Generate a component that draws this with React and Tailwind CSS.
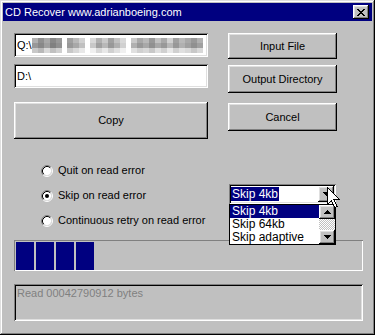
import React from "react";

const raised =
  "shadow-[inset_-1px_-1px_#000,inset_1px_1px_#fff,inset_-2px_-2px_#808080,inset_2px_2px_#dfdfdf]";
const sunken =
  "shadow-[inset_1px_1px_#808080,inset_-1px_-1px_#fff,inset_2px_2px_#000,inset_-2px_-2px_#dfdfdf]";

function Radio({ checked }) {
  return (
    <svg width="12" height="12" viewBox="0 0 12 12" className="shrink-0">
      <circle cx="6" cy="6" r="4.2" fill="#fff" />
      <path d="M2.11 9.89 A5.5 5.5 0 0 1 9.89 2.11" fill="none" stroke="#808080" strokeWidth="1" />
      <path d="M9.89 2.11 A5.5 5.5 0 0 1 2.11 9.89" fill="none" stroke="#fff" strokeWidth="1" />
      <path d="M2.82 9.18 A4.5 4.5 0 0 1 9.18 2.82" fill="none" stroke="#000" strokeWidth="1" />
      <path d="M9.18 2.82 A4.5 4.5 0 0 1 2.82 9.18" fill="none" stroke="#dfdfdf" strokeWidth="1" />
      {checked && <circle cx="6" cy="6" r="2" fill="#000" />}
    </svg>
  );
}

function Arrow({ up }) {
  return (
    <svg width="7" height="4" viewBox="0 0 7 4" shapeRendering="crispEdges">
      {up ? (
        <>
          <rect x="3" y="0" width="1" height="1" fill="#000" />
          <rect x="2" y="1" width="3" height="1" fill="#000" />
          <rect x="1" y="2" width="5" height="1" fill="#000" />
          <rect x="0" y="3" width="7" height="1" fill="#000" />
        </>
      ) : (
        <>
          <rect x="0" y="0" width="7" height="1" fill="#000" />
          <rect x="1" y="1" width="5" height="1" fill="#000" />
          <rect x="2" y="2" width="3" height="1" fill="#000" />
          <rect x="3" y="3" width="1" height="1" fill="#000" />
        </>
      )}
    </svg>
  );
}

function CloseX() {
  const rows = [
    [[0, 2], [6, 2]],
    [[1, 2], [5, 2]],
    [[2, 4]],
    [[3, 2]],
    [[2, 4]],
    [[1, 2], [5, 2]],
    [[0, 2], [6, 2]],
  ];
  return (
    <svg width="8" height="7" viewBox="0 0 8 7" shapeRendering="crispEdges">
      {rows.map((segs, y) =>
        segs.map(([x, w], i) => <rect key={y + "-" + i} x={x} y={y} width={w} height="1" fill="#000" />)
      )}
    </svg>
  );
}

// pixelated (blurred) path data
const blurCols = [
  [0xb0, 0x98, 0xc8], [0x90, 0x88, 0xb8], [0xa8, 0xa0, 0xd8], [0x88, 0x80, 0xc0], [0x98, 0x90, 0xd0],
  null,
  [0xa0, 0x98, 0xc8], [0xb8, 0xa8, 0xd8], [0xd0, 0xc0, 0xe8],
  null,
  [0xd8, 0xc8, 0xf0], [0xb0, 0xa0, 0xd8], [0xc8, 0xb8, 0xe8], [0xa0, 0x98, 0xd0], [0xc0, 0xb0, 0xe0], [0xd8, 0xd0, 0xf0],
  null,
  [0xc8, 0xb0, 0xe0], [0xa8, 0x98, 0xd0], [0xb8, 0xa8, 0xd8], [0x98, 0x90, 0xc8], [0xc0, 0xa8, 0xe0], [0xa8, 0x98, 0xd0], [0xd0, 0xb8, 0xe8], [0xa0, 0x98, 0xd0], [0xb8, 0xb0, 0xe0], [0xa8, 0xa0, 0xd8], [0x98, 0x90, 0xc8], [0xb0, 0xa0, 0xd8],
];

function Blur() {
  return (
    <div className="flex items-center h-[15px]">
      {blurCols.map((c, i) =>
        c === null ? (
          <div key={i} className="w-[5px] h-full" />
        ) : (
          <div key={i} className="w-[6px] h-full flex flex-col">
            {c.map((g, j) => (
              <div key={j} className="flex-1" style={{ background: `rgb(${g},${g},${g})` }} />
            ))}
          </div>
        )
      )}
    </div>
  );
}

function Button({ children, className }) {
  return (
    <div className={`flex items-center justify-center bg-[#c0c0c0] ${raised} ${className}`}>
      {children}
    </div>
  );
}

export default function App() {
  return (
    <div
      className="w-[375px] h-[335px] bg-[#c0c0c0] p-[3px] flex flex-col text-[11px] text-black leading-[13px] shadow-[inset_-1px_-1px_#000,inset_1px_1px_#dfdfdf,inset_-2px_-2px_#808080,inset_2px_2px_#fff]"
      style={{ fontFamily: '"Liberation Sans", Arial, sans-serif' }}
    >
      {/* Title bar */}
      <div className="h-[18px] bg-[#000080] flex items-center justify-between pl-[2px] pr-[3px]">
        <span className="text-white text-[11px]">CD Recover www.adrianboeing.com</span>
        <div className={`w-[16px] h-[14px] bg-[#c0c0c0] flex items-center justify-center ${raised}`}>
          <CloseX />
        </div>
      </div>

      {/* Body */}
      <div className="flex flex-col pl-[11px] pt-[12px]">
        {/* Top section */}
        <div className="flex">
          <div className="w-[194px] flex flex-col">
            <div className={`h-[24px] bg-white flex items-center pl-[3px] overflow-hidden ${sunken}`}>
              <span>Q:\</span>
              <Blur />
            </div>
            <div className={`h-[24px] mt-[7px] bg-white flex items-center pl-[3px] ${sunken}`}>
              <span>D:\</span>
            </div>
            <Button className="h-[37px] mt-[14px]">Copy</Button>
          </div>
          <div className="w-[109px] ml-[20px] flex flex-col">
            <Button className="h-[26px]">Input File</Button>
            <Button className="h-[28px] mt-[6px]">Output Directory</Button>
            <Button className="h-[28px] mt-[10px]">Cancel</Button>
          </div>
        </div>

        {/* Options */}
        <div className="flex mt-[25px]">
          <div className="w-[214px] pl-[27px] flex flex-col gap-[12px]">
            <div className="h-[13px] flex items-center gap-[5px]">
              <Radio />
              <span>Quit on read error</span>
            </div>
            <div className="h-[13px] flex items-center gap-[5px]">
              <Radio checked />
              <span>Skip on read error</span>
            </div>
            <div className="h-[13px] flex items-center gap-[5px]">
              <Radio />
              <span>Continuous retry on read error</span>
            </div>
          </div>
          <div className="mt-[20px] ml-[1px] relative z-10">
            <div className={`w-[107px] h-[20px] bg-white flex items-center pl-[2px] pr-[2px] ${sunken}`}>
              <span className="bg-[#000080] text-white px-[1px] text-[12px] leading-[14px]">Skip 4kb</span>
              <div className={`ml-auto w-[16px] h-[16px] bg-[#c0c0c0] flex items-center justify-center ${raised}`}>
                <Arrow />
              </div>
            </div>
            {/* dropdown list */}
            <div className="absolute left-0 top-[20px] w-[107px] h-[41px] bg-white border border-black flex text-[12px]">
              <div className="flex-1 flex flex-col">
                <div className="h-[13px] leading-[13px] bg-[#000080] text-white pl-[2px]">Skip 4kb</div>
                <div className="h-[13px] leading-[13px] pl-[2px]">Skip 64kb</div>
                <div className="h-[13px] leading-[13px] pl-[2px]">Skip adaptive</div>
              </div>
              <div className="w-[16px] flex flex-col">
                <div className={`h-[14px] bg-[#c0c0c0] flex items-center justify-center ${raised}`}>
                  <Arrow up />
                </div>
                <div className="flex-1 bg-[repeating-conic-gradient(#c0c0c0_0%_25%,#fff_0%_50%)] bg-[length:2px_2px]" />
                <div className={`h-[14px] bg-[#c0c0c0] flex items-center justify-center ${raised}`}>
                  <Arrow />
                </div>
              </div>
            </div>
            {/* mouse cursor */}
            <svg
              className="absolute left-[98px] top-[3px]"
              width="14"
              height="23"
              viewBox="0 0 14 23"
              shapeRendering="crispEdges"
            >
              <path
                d="M0.5 0.5 L0.5 17.5 L4.5 13.5 L7.5 20.5 L10 19.5 L7 12.5 L12.5 12.5 Z"
                fill="#fff"
                stroke="#000"
                strokeWidth="1"
                strokeLinejoin="miter"
              />
            </svg>
          </div>
        </div>

        {/* Progress */}
        <div className="mt-[13px] w-[349px] h-[31px] p-[2px_1px_1px_2px] flex gap-[2px] shadow-[inset_1px_1px_#808080,inset_-1px_-1px_#fff]">
          <div className="w-[18px] h-full bg-[#000080]" />
          <div className="w-[18px] h-full bg-[#000080]" />
          <div className="w-[18px] h-full bg-[#000080]" />
          <div className="w-[18px] h-full bg-[#000080]" />
        </div>

        {/* Status */}
        <div className={`mt-[13px] w-[349px] h-[37px] pt-[3px] pl-[3px] text-[#808080] ${sunken}`}>
          Read 00042790912 bytes
        </div>
      </div>
    </div>
  );
}
